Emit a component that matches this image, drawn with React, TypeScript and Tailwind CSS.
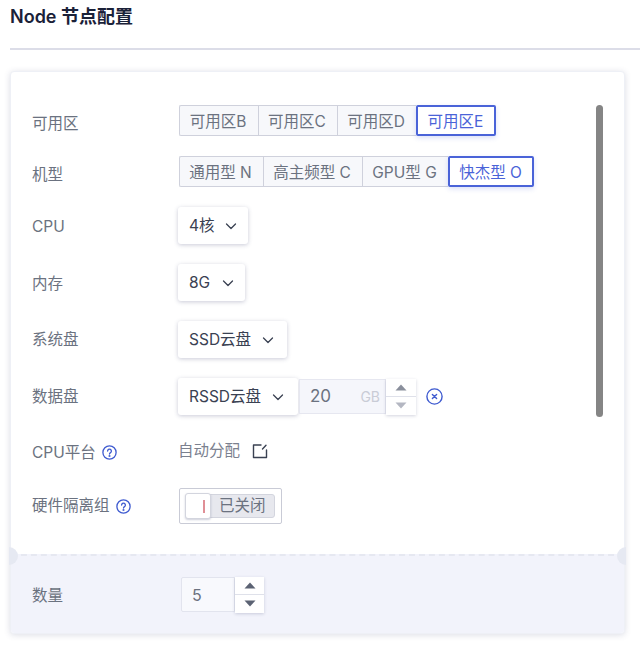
import React from "react";

const font = { fontFamily: '"Inter","Noto Sans CJK SC",sans-serif' };

function Chevron() {
  return (
    <svg width="12" height="12" viewBox="0 0 12 12" fill="none" stroke="#3a4152" strokeWidth="1.3" strokeLinecap="round" strokeLinejoin="round">
      <path d="M1.5 4l4.5 4.5L10.5 4" />
    </svg>
  );
}

function Help() {
  return (
    <svg width="15" height="15" viewBox="0 0 15 15" fill="none" stroke="#3f5bd0" strokeWidth="1.3" strokeLinecap="round">
      <circle cx="7.5" cy="7.5" r="6.6" />
      <path d="M5.6 6a1.9 1.9 0 1 1 2.9 1.6c-.6.4-1 .7-1 1.4" />
      <circle cx="7.5" cy="11" r=".4" fill="#3f5bd0" />
    </svg>
  );
}

function Row({ label, children, help, h, mb, labelPt = "pt-[2px]" }: { label: string; children: React.ReactNode; help?: boolean; h: string; mb: string; labelPt?: string }) {
  return (
    <div className={`flex items-center ${h} ${mb}`}>
      <div className={`w-[147px] shrink-0 flex items-center gap-[6px] text-[15.5px] text-[#6b7280] ${labelPt}`}>
        {label}
        {help && <Help />}
      </div>
      {children}
    </div>
  );
}

function Segments({ items, active }: { items: { t: string; w: string }[]; active: number }) {
  return (
    <div className="flex h-[31px]">
      {items.map((it, i) =>
        i === active ? (
          <div key={it.t} className={`${it.w} flex items-center justify-center pt-[3px] pr-[1px] border-2 border-[#4a63d8] rounded-[2px] bg-white text-[#4a63d8] text-[15.5px] shadow-[0_2px_5px_rgba(74,99,216,0.2)]`}>
            {it.t}
          </div>
        ) : (
          <div key={it.t} className={`${it.w} flex items-center justify-center pt-[3px] pr-[2px] border border-[#cfd1dc] border-r-0 bg-[#f7f8fb] text-[#6b7280] text-[15.5px] first:rounded-l-[2px]`}>
            {it.t}
          </div>
        )
      )}
    </div>
  );
}

function Select({ text, w, gap }: { text: string; w: string; gap: string }) {
  return (
    <div className={`${w} h-[37px] -ml-px flex items-center pl-[11px] ${gap} rounded-[3px] bg-white text-[#3a4152] text-[15.5px] shadow-[0_1px_4px_rgba(60,66,110,0.28)]`}>
      <span>{text}</span>
      <Chevron />
    </div>
  );
}

function Tri({ up, color }: { up?: boolean; color: string }) {
  return (
    <svg width="12" height="7" viewBox="0 0 12 7" fill={color}>
      <path d={up ? "M6 0.5L11.5 6.5H0.5z" : "M6 6.5L0.5 0.5H11.5z"} />
    </svg>
  );
}

function Stepper({ w, h, dim }: { w: string; h: string; dim?: boolean }) {
  return (
    <div className={`${w} ${h} flex flex-col bg-white shadow-[0_1px_3px_rgba(60,66,110,0.22)]`}>
      <div className="flex-1 flex items-center justify-center border-b border-[#dfe1ea]">
        <Tri up color={dim ? "#8a8f9c" : "#5b6273"} />
      </div>
      <div className="flex-1 flex items-center justify-center">
        <Tri color={dim ? "#b4b7c2" : "#5b6273"} />
      </div>
    </div>
  );
}

export default function App() {
  return (
    <div className="w-[640px] h-[646px] bg-white overflow-hidden pl-[10px]" style={font}>
      <h1 className="pt-[6px] h-[48px] text-[18px] leading-[22px] font-semibold text-[#1a2138]">Node 节点配置</h1>
      <div className="h-[2px] bg-[#dcdde8]" />
      <div className="relative mt-[21px] w-[615px] h-[563px] rounded-[4px] bg-white border border-[#eef0f6] shadow-[0_1px_6px_rgba(60,66,110,0.18)] flex flex-col">
        <div className="flex-1 pl-[21px] pt-[33px] relative">
          <Row label="可用区" h="h-[31px]" mb="mb-[20px]" labelPt="pt-[6px]">
            <Segments
              active={3}
              items={[
                { t: "可用区B", w: "w-[79px]" },
                { t: "可用区C", w: "w-[79px]" },
                { t: "可用区D", w: "w-[79px]" },
                { t: "可用区E", w: "w-[80px]" },
              ]}
            />
          </Row>
          <Row label="机型" h="h-[31px]" mb="mb-[20px]" labelPt="pt-[6px]">
            <Segments
              active={3}
              items={[
                { t: "通用型 N", w: "w-[84px]" },
                { t: "高主频型 C", w: "w-[99px]" },
                { t: "GPU型 G", w: "w-[86px]" },
                { t: "快杰型 O", w: "w-[86px]" },
              ]}
            />
          </Row>
          <Row label="CPU" h="h-[37px]" mb="mb-[20px]" labelPt="pt-[3px]">
            <Select text="4核" w="w-[70px]" gap="gap-[10px]" />
          </Row>
          <Row label="内存" h="h-[37px]" mb="mb-[20px]" labelPt="pt-[3px]">
            <Select text="8G" w="w-[67px]" gap="gap-[12px]" />
          </Row>
          <Row label="系统盘" h="h-[37px]" mb="mb-[20px]" labelPt="pt-0">
            <Select text="SSD云盘" w="w-[109px]" gap="gap-[11px]" />
          </Row>
          <Row label="数据盘" h="h-[37px]" mb="mb-[19px]" labelPt="pt-0">
            <Select text="RSSD云盘" w="w-[120px]" gap="gap-[11px]" />
            <div className="ml-[1px] w-[87px] h-[35px] flex items-center justify-between pl-[10px] pr-[5px] bg-[#f5f6fb] border border-[#e6e7f0] text-[#6b7280]">
              <span className="text-[17px]">20</span>
              <span className="text-[14px] text-[#c9ccd6]">GB</span>
            </div>
            <Stepper w="w-[30px]" h="h-[36px]" dim />
            <svg className="ml-[10px]" width="17" height="17" viewBox="0 0 17 17" fill="none" stroke="#3f5bd0" strokeWidth="1.4" strokeLinecap="round">
              <circle cx="8.5" cy="8.5" r="7.6" />
              <path d="M6.4 6.4l4.2 4.2M10.6 6.4l-4.2 4.2" />
            </svg>
          </Row>
          <Row label="CPU平台" help h="h-[36px]" mb="mb-[18px]" labelPt="pt-[1px]">
            <div className="flex items-center gap-[12px] -ml-px text-[15.5px] text-[#7b818f] -mt-[2px]">
              自动分配
              <svg width="16" height="16" viewBox="0 0 16 16" fill="none" stroke="#3a4152" strokeWidth="1.4" strokeLinecap="round" strokeLinejoin="round">
                <path d="M9 2H1.5v12.5h13V7" />
                <path d="M10.5 6L14 2.2" />
              </svg>
            </div>
          </Row>
          <Row label="硬件隔离组" help h="h-[36px]" mb="mb-0" labelPt="pt-0">
            <div className="w-[103px] h-[36px] border border-[#c9cbd6] rounded-[2px] flex items-center pl-[5px]">
              <div className="relative w-[90px] h-[24px] rounded-[3px] bg-[#e7e8ee] border border-[#d3d5de] flex items-center">
                <div className="w-[26px] h-[26px] -ml-px rounded-[3px] bg-white border border-[#d3d5de] shadow-[0_1px_2px_rgba(60,66,110,0.25)] flex items-center justify-end pr-[5px]">
                  <div className="w-[2px] h-[13px] bg-[#e08f96]" />
                </div>
                <span className="ml-[8px] text-[15.5px] text-[#6b7280]">已关闭</span>
              </div>
            </div>
          </Row>
          <div className="absolute right-[21px] top-[33px] w-[7px] h-[312px] rounded-full bg-[#858585]" />
        </div>
        <div className="relative h-[79px] shrink-0 bg-[#f2f3fb] border-t-2 border-dashed border-[#e6e8f1] pl-[21px] flex items-center rounded-b-[4px]">
          <div className="w-[149px] shrink-0 pt-[2px] text-[15.5px] text-[#6b7280]">数量</div>
          <div className="w-[54px] h-[35px] flex items-center pl-[10px] bg-[#f8f9fd] border border-[#e2e4ee] text-[16px] text-[#6b7280] rounded-l-[2px]">5</div>
          <Stepper w="w-[29px]" h="h-[36px]" />
          <div className="absolute -left-[2px] -top-[9px] w-[9px] h-[18px] rounded-r-full bg-[#e6e9f2]" />
          <div className="absolute -right-[2px] -top-[9px] w-[9px] h-[18px] rounded-l-full bg-[#e6e9f2]" />
        </div>
      </div>
    </div>
  );
}
